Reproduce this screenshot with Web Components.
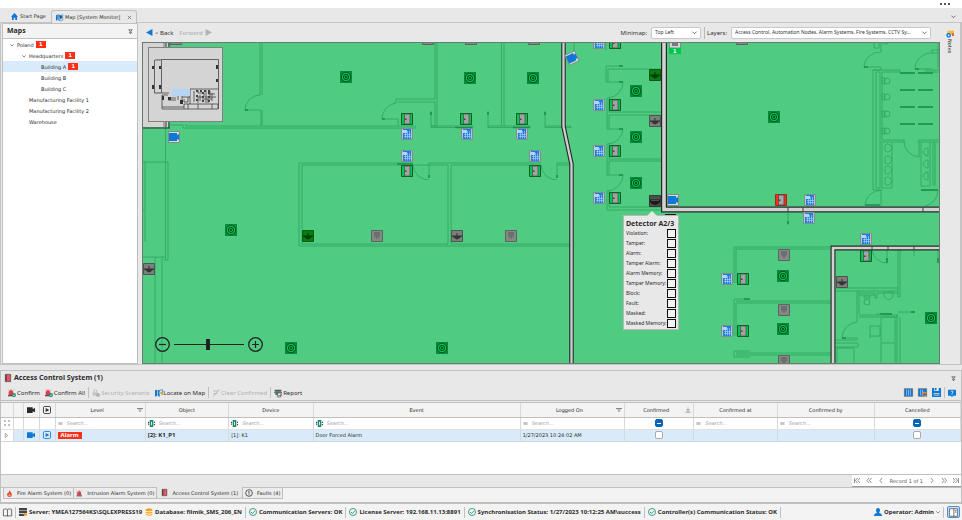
<!DOCTYPE html>
<html lang="en">
<head>
<meta charset="utf-8">
<title>System Monitor</title>
<style>
html,body{margin:0;height:100%}
body{font:5px/10px "DejaVu Sans","Noto Sans",sans-serif;color:#2b2b2b;background:#e8e8e8;overflow:hidden}
</style>
</head>
<body>
<app-shell>
  <tab-strip slot="tabs"></tab-strip>
  <maps-panel slot="side"></maps-panel>
  <map-view slot="main"></map-view>
  <alarm-panel slot="bottom"></alarm-panel>
  <status-bar slot="status"></status-bar>
</app-shell>
<script>
const RESET = `:host,*{box-sizing:border-box}
button,input,select{font:inherit;color:inherit;margin:0;padding:0;border:0;background:none;border-radius:0;outline:0}
button{display:flex;align-items:center;cursor:pointer;white-space:nowrap}`;
function define(name, css, html, init) {
  const t = document.createElement('template');
  t.innerHTML = `<style>${RESET}${css}</style>${html}`;
  customElements.define(name, class extends HTMLElement {
    constructor() {
      super();
      this.attachShadow({mode: 'open'}).append(t.content.cloneNode(true));
    }
    connectedCallback() { if (init) init(this, this.shadowRoot); }
  });
}

const BLUE = '#0f78d4';
const ICONS = {
  home: `<path fill="${BLUE}" d="M6 0 12 6.5H10.3V12H7.3V8H4.7V12H1.7V6.5H0Z"/>`,
  map: `<path fill="${BLUE}" d="M0 2 3 1V10L0 11.5ZM4 1 6 2V11L4 10Z"/><path fill="none" stroke="${BLUE}" d="M4 1.5 8 2.500 11.500 1V10.500L8 12 4 10.500"/><path fill="#24507a" d="M5.500 3 9 2 11 5 8 10Z"/>`,
  mapgo: `<path fill="${BLUE}" d="M0 2 3 1V10L0 11.5ZM4 1 7 2V12L4 10Z"/><path fill="none" stroke="${BLUE}" d="M7 2 11.5 1V9"/><path fill="#f5a11a" d="M6 5H9V3L12 6 9 9V7H6Z"/>`,
  close: `<path stroke="#555" stroke-width="1.500" d="M2 2 10 10M10 2 2 10"/>`,
  pin: `<path fill="none" stroke="#444" stroke-width="1.500" d="M1 2H11M3 2 5 6 3 9H9L7 6 9 2M6 9V12"/>`,
  chev: `<path fill="none" stroke="#555" stroke-width="2" d="M1 4 6 9 11 4"/>`,
  left: `<path fill="${BLUE}" d="M11 0V12L0 6Z"/>`,
  right: `<path fill="#b4b4b4" d="M1 0V12L12 6Z"/>`,
  notes: `<path fill="#f7ba3a" d="M2 1H12V7H2Z"/><path fill="#e2603c" d="M9 5H12V9H9Z"/><circle cx="4" cy="8" r="3.500" fill="${BLUE}"/><circle cx="4" cy="8" r="1.300" fill="#fff"/>`,
  book: `<path fill="#e25563" stroke="#444" d="M2 .500H10V11.500H2Z"/><path stroke="#444" stroke-width="2" d="M3 1V11"/>`,
  siren: `<path fill="#dc3d4b" d="M2 9V6A3.500 4 0 0 1 9 6V9Z"/><path stroke="#dc3d4b" d="M5.500 0V2M1 1 2.500 2.500M10 1 8.500 2.500M0 5H1.500"/><path fill="#555" d="M1 9H10V11H1Z"/>`,
  sirenok: `<path fill="#dc3d4b" d="M1 9V6A3.500 4 0 0 1 8 6V9Z"/><path stroke="#dc3d4b" d="M4.500 0V2M.500 1 2 2.500M9 1 7.500 2.500"/><path fill="#555" d="M0 9H8V11H0Z"/><circle cx="9" cy="9" r="3" fill="#1d8a6c"/><path fill="none" stroke="#fff" d="M7.500 9 9 10 10.500 8"/>`,
  lock: `<path fill="none" stroke="#c0c0c0" stroke-width="1.500" d="M3 5V3A2 2 0 0 1 7 3V5"/><path fill="#c4c4c4" d="M1 5H9V10H1Z"/><circle cx="9" cy="9" r="3" fill="#b4b4b4"/>`,
  clear: `<path fill="none" stroke="#b8b8b8" stroke-width="1.500" d="M2 3H9M2 7H8M2 11 11 1"/>`,
  report: `<path fill="#555" d="M1 1H11V4H1ZM0 5H12V6H0Z"/><path fill="#1d8a6c" d="M2 5H6V9H2Z"/><path fill="none" stroke="#555" d="M3 6H11V10H5V12H10V8"/>`,
  grid: `<path fill="${BLUE}" stroke="#666" d="M.500 1H11.500V11H.500Z"/><path stroke="#9fcaf0" d="M3.500 2V10M6 2V10M8.500 2V10"/>`,
  gridset: `<path fill="${BLUE}" stroke="#666" d="M.500 1H11.500V11H.500Z"/><path stroke="#9fcaf0" d="M3.500 2V10M6 2V10"/><path fill="none" stroke="#f08a24" stroke-width="2" d="M6 8A3 3 0 0 1 11 7M11 10A3 3 0 0 1 7 10"/>`,
  save: `<path fill="${BLUE}" d="M0 0H12V12H0Z"/><path fill="#e8e8e8" d="M3 0H9V4H3ZM2 6.500H10V7.500H2ZM2 9H10V10H2Z"/><path fill="${BLUE}" d="M4 0H6V3H4Z"/>`,
  help: `<path fill="${BLUE}" d="M0 1H12V10H8L6 12 4 10H0Z"/><path fill="none" stroke="#fff" stroke-width="1.200" d="M4.500 4A1.500 1.500 0 1 1 6 6V7M6 8V9"/>`,
  camera: `<path fill="currentColor" d="M0 2H8.500V4.500L12 3V9.500L8.500 8V10.500H0Z"/>`,
  play: `<rect x=".7" y=".7" width="10.600" height="10.600" rx="2" fill="none" stroke="currentColor" stroke-width="1.300"/><path fill="currentColor" d="M4 3 9.500 6 4 9Z"/>`,
  filter: `<path stroke="#555" stroke-width="1.400" d="M0 3H12M3 6H9M5 9H7"/>`,
  sort: `<path stroke="#777" stroke-width="1.200" d="M5 2H7M3 5H9M3 8H9M1 10.500H11"/>`,
  eq: `<path stroke="#777" stroke-width="1.500" d="M1 4.500H11M1 7.500H11"/>`,
  abc: `<rect x="3" y="0" width="6" height="12" fill="#118a70"/><path stroke="#fff" stroke-width="1.500" d="M6 3V9"/><path stroke="#444" stroke-width="2" d="M0 4H2M0 7H2M10 4H12M10 8H12"/>`,
  expand: `<path fill="none" stroke="#888" d="M1 4V1H4M8 1H11V4M11 8V11H8M4 11H1V8M1 1 4 4M11 1 8 4M1 11 4 8M11 11 8 8"/>`,
  tri: `<path fill="none" stroke="#777" stroke-width="1.500" d="M3 1 9 6 3 11Z"/>`,
  fire: `<path fill="#e03c3c" d="M6 0C7 3 10 5 10 8A4 4 0 0 1 2 8C2 6 3 5 4 4L5 5Z"/><path fill="#f6b03a" d="M6 6 8 9A2 2 0 0 1 4 9Z"/>`,
  fault: `<circle cx="6" cy="6" r="5" fill="none" stroke="#333" stroke-width="1.200"/><path stroke="#333" stroke-width="1.300" d="M6 3V7M6 8V9.300"/>`,
  check: `<circle cx="6" cy="6" r="5.300" fill="none" stroke="#158d72" stroke-width="1.200"/><path fill="none" stroke="#158d72" stroke-width="1.300" d="M3 6 5.200 8.200 9.200 4"/>`,
  journal: `<path fill="none" stroke="#444" d="M6 2V11M6 2C4 1 2 1 .500 2V10.500H11.500V2C10 1 8 1 6 2"/>`,
  server: `<path fill="#444" d="M0 0H12V3.300H0ZM0 4.300H12V7.600H0ZM0 8.600H8V12H0Z"/><circle cx="9.500" cy="9.500" r="2.500" fill="#f2952c"/>`,
  db: `<path fill="#f6a31c" d="M1 2Q6-1 11 2V4Q6 6 1 4ZM1 5.500Q6 7.500 11 5.500V7.500Q6 9.500 1 7.500ZM1 9Q6 11 11 9V10.500Q6 13 1 10.500Z"/>`,
  user: `<path fill="${BLUE}" d="M3 3A3 3 0 0 1 9 3C9 5 8 7 7.500 7.500 10 8 12 9 12 12H0C0 9 2 8 4.500 7.500 4 7 3 5 3 3"/>`,
  panel: `<path fill="#fff" stroke="#444" d="M.500 1H11.500V11H.500Z"/><path stroke="#444" d="M6.500 1V11M8 3.500H10M8 5.500H10"/>`
};
const ic = (name, size = 8) => `<ui-icon name="${name}" size="${size}"></ui-icon>`;
define('ui-icon', ':host{display:inline-block;flex:none;line-height:0}svg{display:block;overflow:visible}', '<svg viewBox="0 0 12 12" aria-hidden="true"></svg>', (el, root) => {
  const s = root.querySelector('svg'), n = el.getAttribute('size');
  s.setAttribute('width', n); s.setAttribute('height', n);
  s.innerHTML = ICONS[el.getAttribute('name')];
});

define('app-shell', `
:host{display:flex;flex-direction:column;height:100vh;min-height:420px}
.top{background:#fff;height:8px;display:flex;justify-content:flex-end;padding-right:12px}
.dots{gap:2px}.dots i{width:2px;height:2px;border-radius:1px;background:#222}
.mid{flex:1;display:flex;min-height:0;border:solid #c4c4c4;border-width:1px 2px 1px 1px;margin-bottom:5px}
.side{width:138px;flex:none;display:flex;padding:0 1px}.main{flex:1;min-width:0;display:flex}`,
`<div class="top"><button class="dots" aria-label="More"><i></i><i></i><i></i></button></div>
<slot name="tabs"></slot>
<div class="mid"><div class="side"><slot name="side"></slot></div><div class="main"><slot name="main"></slot></div></div>
<slot name="bottom"></slot><slot name="status"></slot>`);

define('tab-strip', `
:host{display:flex;height:14px;padding:2px 6px 0 4px;align-items:stretch}
button{gap:2px;padding:0 5px 0 7px}
.on{border:1px solid #c0c0c0;border-bottom:0;border-radius:3px 3px 0 0;background:#e8e8e8;padding:0 4px;margin-bottom:-1px;position:relative}
.on ui-icon:last-child{margin-left:5px}.more{margin-left:auto;padding:0}`,
`<button>${ic('home', 7)}Start Page</button><button class="on">${ic('map', 7)}Map [System Monitor]${ic('close', 5)}</button>
<button class="more" aria-label="Tab list">${ic('chev', 5)}</button>`);

define('alert-count', ':host{display:inline-block;background:#fc3019;color:#fff;font-weight:700;line-height:7px;width:10px;text-align:center;margin-left:2px}', '<slot></slot>');
define('tree-row', `
:host{display:block}:host([selected]){background:#d9ebfb}
button{height:11px;width:100%;padding-left:calc(4px + var(--level)*12px)}
.c{width:10px;line-height:0}`, `<button><span class="c"></span><slot></slot></button>`, (el, root) => {
  el.style.setProperty('--level', el.getAttribute('level'));
  if (el.hasAttribute('open')) root.querySelector('.c').innerHTML = ic('chev', 4);
});
define('maps-panel', `
:host{flex:1;display:flex;flex-direction:column;border:1px solid #c0c0c0;background:#fff}
header{height:15px;padding:0 4px;display:flex;align-items:center;justify-content:space-between;background:#f3f3f3;border-bottom:1px solid #c0c0c0}
h2{margin:0;font:700 7px/10px "Noto Sans",sans-serif}`,
`<header><h2>Maps</h2><button aria-label="Pin panel">${ic('pin', 5)}</button></header>
<tree-row level="0" open>Poland <alert-count>1</alert-count></tree-row>
<tree-row level="1" open>Headquarters <alert-count>1</alert-count></tree-row>
<tree-row level="2" selected>Building A <alert-count>1</alert-count></tree-row>
<tree-row level="2">Building B</tree-row><tree-row level="2">Building C</tree-row>
<tree-row level="1">Manufacturing Facility 1</tree-row><tree-row level="1">Manufacturing Facility 2</tree-row><tree-row level="1">Warehouse</tree-row>`);

define('state-popup', `
:host{position:absolute;width:56px;background:#e8e8e8;border:1px solid #b8b8b8;padding:3px 2px 1px 2px}
:host::before{content:"";position:absolute;left:23px;top:-5px;border:5px solid transparent;border-top:0;border-bottom-color:#e8e8e8}
h3{margin:0;font:700 7px/9px "Noto Sans",sans-serif;white-space:nowrap}
label{display:flex;justify-content:space-between;align-items:center;height:10px;white-space:nowrap;font-family:"Noto Sans",sans-serif}
input{appearance:none;flex:none;width:9px;height:9px;border:1px solid #111;background:#f3f3f3;margin-left:-2px}`,
`<h3><slot></slot></h3>` + ['Violation', 'Tamper', 'Alarm', 'Tamper Alarm', 'Alarm Memory', 'Tamper Memory', 'Block', 'Fault', 'Masked', 'Masked Memory'].map(s => `<label>${s}:<input type="checkbox"></label>`).join(''));

const at = (id, pts) => pts.map(([x, y]) => `<use href="#${id}" x="${x - 6}" y="${y - 6}"/>`).join('');
const thin = [
 'M260 42V95A15 15 0 0 0 245 110H261V126M262 42V95M262 110V126M170 125H183V128H416M186 124V126H416',
 'M165.500 128V260M168 162V260H164M142 162H168M145 162V242M142 210H145M142 257H165M155 257V364M162 257V364',
 'M396 163H299V246H570M302 244V165H448V244M451 244V165H541M302 244H448M451 244H570',
 'M435 42V99H396V103A16 16 0 0 0 382 119H398V126M437 42V126H431M435 102V126M398 102H435M501.500 42V126M504 42V126',
 'M431 111V127.500H473V126H431M488 111V127.500H530V126H488M545 111V127.500H571V126H545',
 'M396 163H413M429 178V163H541M429 180A16 16 0 0 1 413 165M557 178V163H572V165H557M557 180A16 16 0 0 1 541 165',
 'M608 82V69H662M623 66H606V82H623A16 16 0 0 1 607 98V129H623A16 16 0 0 1 607 144V175H623A16 16 0 0 1 607 191V210H661M609 98V112H662M609 129V115H662M609 144V159H662M609 175V161H662M609 191V207H661M574 42V52M606 42V50',
 'M881 42V52A16 16 0 0 0 864 67H881V70H873V190H881V206M882 190A17 16 0 0 0 865 205M876 72H880V188H876ZM873 70H900V72H882V140H904V142H880M918 140H940M918 142H940M940 53H932V50H940M932 53A17 16 0 0 0 915 69H932M925 70H940M925 72H940M919 141V157A16 16 0 0 1 904 141M882 143V188H892V143M921 142V186H930V142M933 142V186M935 142V186M938 42V68M874 42V48H879V42M921 190H938A16 16 0 0 1 925 206',
 'M900 73H915M918 73H933M900 90H915M918 90H933M900 107H915M918 107H933M900 124H915M918 124H933',
 'M736 283V249H831M734 283V247H831M736 336V303H831M750 299H734V336M736 301H831M750 351H734V357H750M736 353H831M736 355H831M788 210V225',
 'M898 250V297H900V250M835 288H898M835 291H898M857 291V322A16 16 0 0 0 842 338H858M859 291V314M859 317H898M859 315H898M835 340H858M835 343H858V347H835M837 348H854V364H837ZM872 250A15 14 0 0 0 887 263V248M897 315V364M900 317V364M881 317H895V364H881ZM881 343H895M870 338V326H880V336H870M914 248V256M938 248V263M859 293H875V298H877V293H898M859 295H875M898 312H915M876 314H892'
];
const tips = 'M397 164H413M455 127.500H472M513 127.500H530M382 119H385M245 110H248M431 112V115M488 112V115M545 112V115M429 175V178M557 175V178M619 66H623M619 82H623M619 129H623M619 175H623M864 67H868M915 69H919M921 190H938M865 205H880M788 221V224M750 299H744M887 258V263M842 338H846M880 314H892M911 312H915M938 258V263M900 73H915M918 73H933M900 90H915M918 90H933M900 107H915M918 107H933M900 124H915M918 124H933';
const seats = [81, 97, 114, 131].map(y => `<circle cx="887" cy="${y}" r="3"/><path d="M882 ${y - 3}H885V${y + 3}H882Z"/>`).join('') +
 [148, 160, 170, 181].map(y => `<path d="M885 ${y - 3}A4 4 0 1 1 885 ${y + 3}Z"/>`).join('') +
 [152, 164, 176].map(y => `<path d="M928 ${y - 4}A4.500 4 0 1 0 928 ${y + 4}Z"/>`).join('') +
 '<circle cx="867" cy="302" r="3"/><path d="M864 296H870V298H864ZM884 292H893V295A4 4 0 0 1 884 295ZM882 42A4 4 0 0 0 889 42"/>';
const mini = `<g transform="translate(148,47)"><rect x=".500" y=".500" width="74" height="74" fill="#d4d4d4" stroke="#808080"/>
<g fill="none" stroke="#444" stroke-width=".8"><path d="M13.500 12.500H70.500V62M13.500 12.500V46H21M7 13H13M6.500 13V46H13" /><path stroke="#888" d="M7 12.500H13M7 46H13"/>
<path d="M14 48V62H36M14 60H36M36 57H70V62H36V57M40 57V62M64 57V62M50 57V62M14 48H20M20 51H28M20 53H28M42 42H70M42 42V57M46 44V55M50 43V46H56V50H50V56M52 48V54M58 43V56M54 52H64M62 44V50H57M60 52V56M64 46V54M60 47H67M61 50H68M34 44V56M34 50H42M36 52V55H40V50M30 48V53"/><path stroke-width="2" stroke-dasharray="2 2" d="M48 44H64M49 48V56M55 45V55M61 45V55"/></g>
<path fill="#333" d="M4 19H6V22H4ZM11 19H13V22H11ZM4 38H6V42H4ZM11 38H13V42H11ZM68 18H70V22H68ZM68 32H70V35H68ZM14 49H16V53H14ZM20 50H23V53H20ZM32 53H35V57H32Z"/><rect x="24" y="42" width="18" height="7" fill="#b4d6f2"/></g>`;
define('map-canvas', `
:host{display:block;position:relative;flex:1;min-width:0;overflow:hidden;background:#50cc82;border:1px solid #6c7a70}
svg.plan{display:block;position:absolute;inset:0;width:100%;height:100%}
svg text{font:700 5px "DejaVu Sans",sans-serif;fill:#fff}
.zoom{position:absolute;left:12px;bottom:11px;display:flex;align-items:center;gap:4px}
.zoom button svg{display:block}
input{appearance:none;width:70px;height:12px;background:linear-gradient(#222,#222) center/100% 1px no-repeat}
input::-webkit-slider-thumb{appearance:none;width:4px;height:11px;background:#222}
state-popup{left:480px;top:172px}`,
`<svg class="plan" role="img" aria-label="Floor plan of Building A">
<defs>
<symbol id="spk" width="12" height="12" viewBox="0 0 12 12"><path fill="#078a3c" d="M0 0H12V12H0Z"/><circle cx="6" cy="6" r="4.700" fill="#04c54e" stroke="#053d18" stroke-width=".8"/><circle cx="6" cy="6" r="2.600" fill="#04b548" stroke="#053d18" stroke-width=".9"/><circle cx="6" cy="6" r="1" fill="#053d18"/></symbol>
<symbol id="door" width="12" height="12" viewBox="0 0 12 12"><path fill="#04c54e" stroke="#086028" d="M.500 .500H11.500V11.500H.500Z"/><path fill="#a3a3a3" stroke="#4c554c" stroke-width=".8" d="M3.500 1H9V11H3.500Z"/><path fill="#444" d="M4 5.500H5.500V7H4Z"/></symbol>
<symbol id="rdoor" width="12" height="12" viewBox="0 0 12 12"><path fill="#fb2c16" stroke="#a02818" d="M.500 .500H11.500V11.500H.500Z"/><path fill="#a6a6ac" stroke="#50454a" stroke-width=".8" d="M3.500 1H9V11H3.500Z"/><path fill="#444" d="M4 5.500H5.500V7H4Z"/></symbol>
<symbol id="key" width="12" height="12" viewBox="0 0 12 12"><path fill="#b9c2c6" stroke="#7f8f8c" d="M.500 .500H11.500V11.500H.500Z"/><path fill="#1e7de0" d="M2 1H10V11H2Z"/><path stroke="#cfe4fb" stroke-width=".5" d="M4.500 5V10.500M6.500 3V10.500M8.500 3V10.500M3 6.500H10M3 8.500H10"/><path fill="#b7d3f2" d="M1 2H6V5H1Z"/></symbol>
<symbol id="dome" width="12" height="12" viewBox="0 0 12 12"><path fill="#7a7f7b" stroke="#4c554f" d="M.500 .500H11.500V11.500H.500Z"/><path fill="#333" d="M1 5.500H11V6.500L9 7.500Q8 9 6 9.500 4 9 3 7.500L1 6.500Z"/><path stroke="#333" stroke-width="1" d="M6 3V6"/></symbol>
<symbol id="ddome" width="12" height="12" viewBox="0 0 12 12"><path fill="#4b504c" stroke="#343b36" d="M.500 .500H11.500V11.500H.500Z"/><path fill="#1c1c1c" d="M1 4.500H11V6.500Q10 9 6 10 2 9 1 6.500Z"/><path stroke="#777" stroke-width=".6" d="M2 5.500H10"/></symbol>
<symbol id="gdome" width="12" height="12" viewBox="0 0 12 12"><path fill="#067f10" stroke="#075c12" d="M.500 .500H11.500V11.500H.500Z"/><path fill="#04390a" d="M1 5.500H11V6.500L9 7.500Q8 9 6 9.500 4 9 3 7.500L1 6.500Z"/><path stroke="#04390a" d="M6 3V6"/></symbol>
<symbol id="heart" width="12" height="12" viewBox="0 0 12 12"><path fill="#858986" stroke="#5c655f" d="M.500 .500H11.500V11.500H.500Z"/><path fill="#6c706d" d="M3 2H9V6L6 9 3 6Z"/></symbol>
<symbol id="cam" width="12" height="12" viewBox="0 0 12 12"><path fill="#d4dcd6" stroke="#7c8c84" d="M.500 .500H11.500V11.500H.500Z"/><path fill="${BLUE}" d="M1 2H9V4L11 3V9L9 8V10H1Z"/></symbol>
</defs>
<g transform="translate(-143,-43)">
<g fill="none" stroke="#2fa561" stroke-width="1" stroke-opacity=".85">${thin.map(d => `<path d="${d}"/>`).join('')}${seats}</g>
<path fill="none" stroke="#1b8f4c" stroke-width="1.500" d="${tips}"/>
<path fill="#d4d4d4" d="M142 42H168V127H142Z"/><path fill="none" stroke="#333" d="M166 42V127M169 42V128M142 128H170"/><path stroke="#777" d="M164 42V127"/>
<g fill="none" stroke-linejoin="miter"><path stroke="#282828" stroke-width="4.500" d="M563.500 42V126.500L571.500 164V364"/><path stroke="#cfcfcf" stroke-width="2.300" d="M563.500 42V126.500L571.500 164V364"/>
<path stroke="#282828" stroke-width="6" d="M664 42V209.500H940"/><path stroke="#d2d2d2" stroke-width="3.600" d="M664 42V209.500H940"/>
<path stroke="#282828" stroke-width="5" d="M940 248H833V364"/><path stroke="#d2d2d2" stroke-width="2.700" d="M940 248H833V364"/>
<path stroke="#444" d="M788 207V212M803 207V212M923 207V212M872 246V250M888 246V250M914 246V250"/></g>
<path fill="#1b1b1b" d="M665 214H676V217H665Z"/>
${at('heart', [[176, 39], [428, 39], [471, 39], [534, 39], [742, 39]])}
${mini}
${at('spk', [[346, 77], [470, 78], [533, 78], [231, 230], [291, 348], [442, 348], [636, 91], [636, 137], [636, 183], [774, 117], [783, 276], [783, 329], [931, 318]])}
${at('door', [[407, 119], [466, 119], [522, 119], [407, 171], [535, 171], [615, 43], [615, 105], [615, 151], [615, 198], [743, 279], [743, 331], [866, 256]])}
${at('rdoor', [[781, 200]])}
${at('key', [[407, 134], [467, 134], [522, 134], [407, 156], [535, 156], [599, 43], [599, 105], [599, 151], [599, 198], [810, 200], [809, 218], [866, 239], [727, 279], [727, 331]])}
${at('gdome', [[308, 236], [655, 75]])}${at('dome', [[149, 269], [457, 236], [842, 282], [655, 121]])}${at('ddome', [[655, 201]])}
${at('heart', [[377, 236], [511, 236], [784, 255], [784, 310], [784, 361]])}
${at('cam', [[174, 137], [673, 200]])}<g transform="rotate(-25 572 58)">${at('cam', [[572, 58]])}</g>
<path fill="#cfd8cf" stroke="#6f9a7c" d="M669.500 42H680.500V48H669.500Z"/><path fill="#778" d="M672 43H678V46H672Z"/><path fill="#04c54e" d="M669 48H681V54H669Z"/><text x="673" y="53">1</text>
</g></svg>
<state-popup>Detector A2/3</state-popup>
<div class="zoom"><button aria-label="Zoom out"><svg width="15" height="15" viewBox="0 0 15 15"><circle cx="7.500" cy="7.500" r="6.800" fill="none" stroke="#222" stroke-width="1.300"/><path stroke="#222" stroke-width="1.200" d="M4 7.500H11"/></svg></button>
<input type="range" min="0" max="100" value="48" aria-label="Zoom level">
<button aria-label="Zoom in"><svg width="15" height="15" viewBox="0 0 15 15"><circle cx="7.500" cy="7.500" r="6.800" fill="none" stroke="#222" stroke-width="1.300"/><path stroke="#222" stroke-width="1.200" d="M4 7.500H11M7.500 4V11"/></svg></button></div>`);

define('map-view', `
:host{flex:1;min-width:0;display:flex}
.col{flex:1;min-width:0;display:flex;flex-direction:column;padding-left:3px}
.bar{height:19px;flex:none;display:flex;align-items:center;font:6px/10px "Noto Sans",sans-serif;padding-right:9px}
.bar button{gap:2px;margin:0 6px 0 4px}.bar .off{color:#aaa;margin:0}
label{display:flex;align-items:center;gap:4px;color:#333}label.m{margin-left:auto}
.sel{position:relative;display:flex;align-items:center}
select{appearance:none;font:5px/9px "Noto Sans",sans-serif;height:12px;width:100%;padding:0 10px 0 3px;background:#fff;border:1px solid #c8c8c8;border-radius:2px}
.sel ui-icon{position:absolute;right:4px;pointer-events:none}
.m .sel{width:50px}.l .sel{width:200px}
.sep{width:1px;height:12px;background:#bbb;margin:0 2px 0 3px}
aside{width:20px;flex:none;padding:7px 0 0 5px}
aside button{flex-direction:column;gap:1px;width:10px}
aside span{writing-mode:vertical-rl}`,
`<div class="col"><div class="bar"><button>${ic('left', 7)} &lt; Back</button><button class="off" disabled>Forward ${ic('right', 7)}</button>
<label class="m">Minimap:<span class="sel"><select><option>Top Left</option></select>${ic('chev', 5)}</span></label><i class="sep"></i>
<label class="l">Layers:<span class="sel"><select><option>Access Control, Automation Nodes, Alarm Systems, Fire Systems, CCTV Sy...</option></select>${ic('chev', 5)}</span></label></div>
<map-canvas></map-canvas></div>
<aside><button>${ic('notes', 8)}<span>Notes</span></button></aside>`);

const search = i => `<label class="s">${ic(i, i === 'eq' ? 5 : 7)}<input placeholder="Search..." aria-label="Search"></label>`;
define('alarm-panel', `
:host{flex:none;display:block;border:1px solid #c0c0c0;border-width:1px 1px 0}
header{display:flex;align-items:center;height:14px;padding:0 5px 0 3px}
h2{flex:1;margin:0 0 0 2px;font:700 7px/10px "Noto Sans",sans-serif}
.tools{display:flex;align-items:center;height:16px;padding:0 5px 0 7px;gap:5px;font:6px/10px "Noto Sans",sans-serif;border-bottom:1px solid #c0c0c0;margin-bottom:1px}
.tools button{gap:1px}.tools .off{color:#b0b0b0}
.sep{width:1px;height:11px;background:#c0c0c0;margin:0 -2px}.tools .end{margin-left:auto}
.grid{background:#fff;height:73px;border:1px solid #c0c0c0;border-width:1px 0}
table{width:100%;table-layout:fixed;border-collapse:collapse}
th{font-weight:400;background:#f3f3f3;height:14px;border-bottom:1px solid #c0c0c0}
th,td{padding:0 2px;border-right:1px solid #d8d8d8;white-space:nowrap;overflow:hidden}
td{height:12px}th.n,td.n{padding:0;text-align:center;line-height:0}
.h{display:flex;align-items:center;justify-content:center}.h ui-icon{margin-left:auto}.h::before{content:"";margin-right:auto}
tr.r td{background:#d9ebfb;border-bottom:1px solid #d0d8e0}tr.r td:first-child{background:#fff}
tr.q td{border-bottom:1px solid #e0e0e0}
.s{display:flex;align-items:center;gap:4px;height:10px}.s input{width:100%;min-width:0;height:10px;font-style:italic}
input::placeholder{color:#9c9c9c;opacity:1}
.lvl{background:#fc3019;color:#fff;font:700 6px/7px "Noto Sans",sans-serif;display:inline-block;padding:0 3px}
.b{font:700 6px/10px "Noto Sans",sans-serif}
input[type=checkbox]{appearance:none;width:8px;height:8px;border:1px solid #aaa;border-radius:2px;background:#fff;vertical-align:middle}
input.mix{background:linear-gradient(#fff,#fff) center/4px 1px no-repeat #0466b8!important;border-color:#0466b8!important}
.blue{color:${BLUE}}
.pager{display:flex;height:13px;border-bottom:1px solid #c0c0c0}
nav{margin-left:auto;display:flex;align-items:center;gap:6px;background:#fff;padding:0 2px;color:#555;border-bottom:1px solid #999}
nav svg{display:block}
.tabs{display:flex;height:16px;background:#f3f3f3;padding:0 0 3px 2px;border-bottom:2px solid #c0c0c0;align-items:stretch}
.tabs button{gap:4px;padding:0 2px;border:1px solid #c0c0c0;border-top:0;background:#ececec;margin-right:-1px}
.tabs .on{margin-top:-1px;background:#e8e8e8;border-radius:0 0 3px 3px;padding:0 4px}`,
`<header>${ic('book', 8)}<h2>Access Control System (1)</h2><button aria-label="Pin panel">${ic('pin', 5)}</button></header>
<div class="tools"><button>${ic('sirenok')}Confirm</button><button>${ic('sirenok')}Confirm All</button><i class="sep"></i><button class="off" disabled>${ic('lock')}Security Scenario</button><button>${ic('mapgo')}Locate on Map</button><i class="sep"></i><button class="off" disabled>${ic('clear')}Clear Confirmed</button><i class="sep"></i><button>${ic('report')}Report</button>
<button class="end" aria-label="Columns">${ic('grid', 9)}</button><button aria-label="Reset columns">${ic('gridset', 9)}</button><button aria-label="Save">${ic('save', 9)}</button><i class="sep"></i><button aria-label="Help">${ic('help')}</button></div>
<div class="grid"><table>
<colgroup><col style="width:12px"><col style="width:10px"><col style="width:16px"><col style="width:16px"><col style="width:9.400%"><col style="width:8.700%"><col style="width:8.800%"><col><col style="width:10.900%"><col style="width:7.200%"><col style="width:8.700%"><col style="width:10.100%"><col style="width:9%"></colgroup>
<thead><tr><th class="n"></th><th class="n"></th><th class="n">${ic('camera')}</th><th class="n">${ic('play')}</th>
<th><div class="h">Level${ic('filter', 6)}</div></th><th>Object</th><th>Device</th><th>Event</th><th><div class="h">Logged On${ic('filter', 6)}</div></th><th><div class="h">Confirmed${ic('sort', 6)}</div></th><th>Confirmed at</th><th>Confirmed by</th><th>Cancelled</th></tr></thead>
<tbody><tr class="q"><td class="n">${ic('expand', 6)}</td><td class="n"></td><td class="n"></td><td class="n"></td><td>${search('eq')}</td><td>${search('abc')}</td><td>${search('abc')}</td><td>${search('abc')}</td><td>${search('eq')}</td><td class="n"><input type="checkbox" class="mix" aria-label="Filter confirmed"></td><td>${search('eq')}</td><td>${search('eq')}</td><td class="n"><input type="checkbox" class="mix" aria-label="Filter cancelled"></td></tr>
<tr class="r"><td class="n">${ic('tri', 5)}</td><td class="n"></td><td class="n blue">${ic('camera')}</td><td class="n blue">${ic('play')}</td><td><span class="lvl">Alarm</span></td><td class="b">[2]: K1_P1</td><td>[1]: K1</td><td>Door Forced Alarm</td><td>1/27/2023 10:24:02 AM</td><td class="n"><input type="checkbox" aria-label="Confirmed"></td><td></td><td></td><td class="n"><input type="checkbox" aria-label="Cancelled"></td></tr></tbody></table></div>
<div class="pager"><nav></nav></div>
<div class="tabs"><button>${ic('fire', 7)}Fire Alarm System (0)</button><button>${ic('siren', 7)}Intrusion Alarm System (0)</button><button class="on">${ic('book', 7)}Access Control System (1)</button><button>${ic('fault')}Faults (4)</button></div>`,
(el, root) => {
  const p = (label, d) => `<button aria-label="${label}"><svg width="6" height="5" viewBox="0 0 6 5"><path fill="none" stroke="#777" stroke-width=".8" d="${d}"/></svg></button>`;
  root.querySelector('nav').innerHTML = p('First', 'M.5 0V5M3.500 0 1.500 2.500 3.500 5M6 0 4 2.500 6 5') + p('Previous page', 'M3 0 1 2.500 3 5M5.500 0 3.500 2.500 5.500 5') + p('Previous', 'M4 0 2 2.500 4 5') +
    '<span>Record 1 of 1</span>' + p('Next', 'M2 0 4 2.500 2 5') + p('Next page', 'M1 0 3 2.500 1 5M3.500 0 5.500 2.500 3.500 5') + p('Last', 'M5.500 0V5M0 0 2 2.500 0 5M2.500 0 4.500 2.500 2.500 5');
});

define('status-item', ':host{display:flex;align-items:center;gap:2px;white-space:nowrap}', '<slot></slot>');
define('status-bar', `
:host{flex:none;display:flex;align-items:center;height:16px;padding:0 2px 0 3px;gap:3px;background:#f3f3f3;font:700 6px/10px "Noto Sans",sans-serif}
i{width:1px;height:11px;background:#c0c0c0}.end{margin-left:auto}
.p{width:13px;height:12px;justify-content:center;background:#cfe4f7;border:1px solid #4a90d0;border-radius:2px}`,
`<button aria-label="Log">${ic('journal', 9)}</button><i></i><status-item>${ic('server')}Server: YMEA127564KS\\SQLEXPRESS19</status-item><status-item>${ic('db')}Database: filmik_SMS_206_EN</status-item><i></i>
<status-item>${ic('check')}Communication Servers: OK</status-item><i></i><status-item>${ic('check')}License Server: 192.168.11.13:8891</status-item><i></i>
<status-item>${ic('check')}Synchronisation Status: 1/27/2023 10:12:25 AM\\success</status-item><i></i><status-item>${ic('check')}Controller(s) Communication Status: OK</status-item><i></i>
<button class="end"><status-item>${ic('user')}Operator: Admin ${ic('chev', 4)}</status-item></button><i></i><button class="p" aria-label="Toggle panel">${ic('panel', 9)}</button>`);
</script>
</body>
</html>
